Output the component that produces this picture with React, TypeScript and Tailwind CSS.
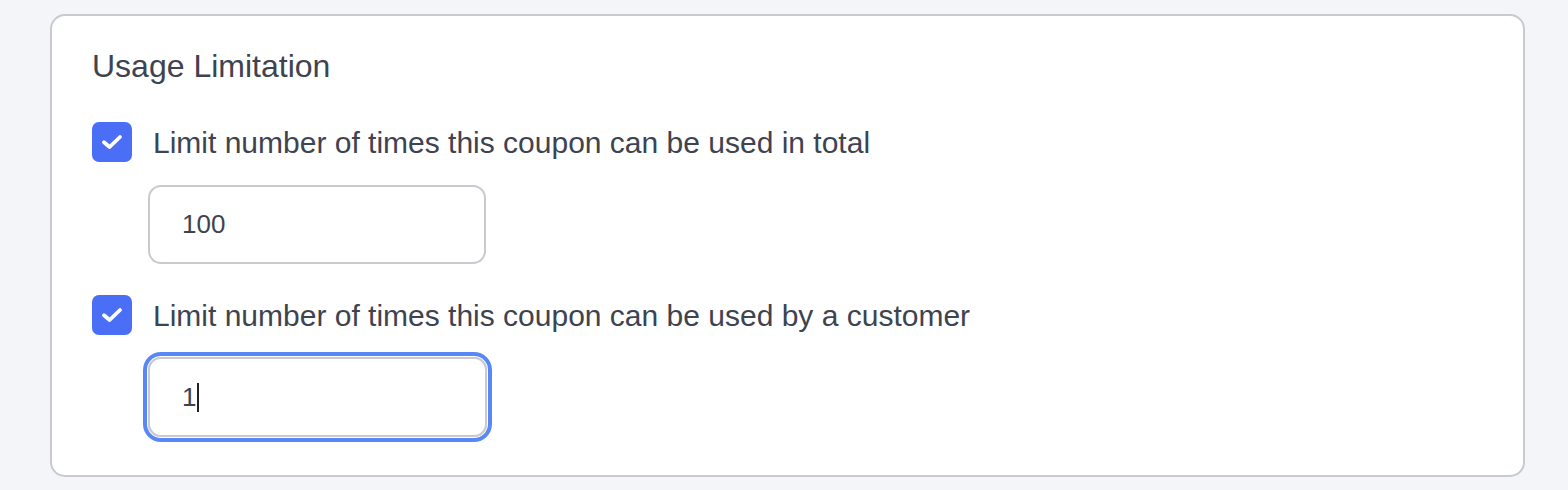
import React from "react";

function Check() {
  return (
    <div className="w-[40px] h-[40px] rounded-[7px] bg-[#4a6ef5] flex items-center justify-center shrink-0">
      <svg width="22" height="16" viewBox="0 0 22 16" fill="none">
        <path d="M3 8.2 L8.6 13 L19 3" stroke="#ffffff" strokeWidth="3.8" strokeLinecap="round" strokeLinejoin="round" />
      </svg>
    </div>
  );
}

export default function App() {
  return (
    <div className="w-[1568px] h-[490px] bg-[#f4f5f9] pt-[14px] pl-[50px] pr-[43px]" style={{ fontFamily: '"Liberation Sans", Arial, sans-serif' }}>
      <div className="h-[463px] bg-white border-2 border-[#c8cad0] rounded-[15px] pl-[40px] pt-[30px]">
        <div className="text-[32px] leading-[40px] text-[#3e4350]">Usage Limitation</div>
        <div className="mt-[36px] flex items-center gap-[21px] h-[40px]">
          <Check />
          <span className="text-[30px] leading-[40px] text-[#3e4350] pt-[2px]">Limit number of times this coupon can be used in total</span>
        </div>
        <div className="mt-[23px] ml-[56px] w-[338px] h-[79px] border-2 border-[#c8cad0] rounded-[13px] flex items-center pl-[32px] text-[26px] text-[#3e4350]">
          100
        </div>
        <div className="mt-[31px] flex items-center gap-[21px] h-[40px]">
          <Check />
          <span className="text-[30px] leading-[40px] text-[#3e4350] pt-[2px]">Limit number of times this coupon can be used by a customer</span>
        </div>
        <div className="mt-[22px] ml-[56px] w-[339px] h-[80px] border-2 border-[#c8cad0] rounded-[13px] flex items-center pl-[32px] text-[26px] text-[#3e4350] shadow-[0_0_0_1px_#ffffff,0_0_0_5px_#5a87f8]">
          <span>1</span>
          <span className="inline-block w-[2px] h-[29px] bg-[#222] ml-[1px]" />
        </div>
      </div>
    </div>
  );
}
